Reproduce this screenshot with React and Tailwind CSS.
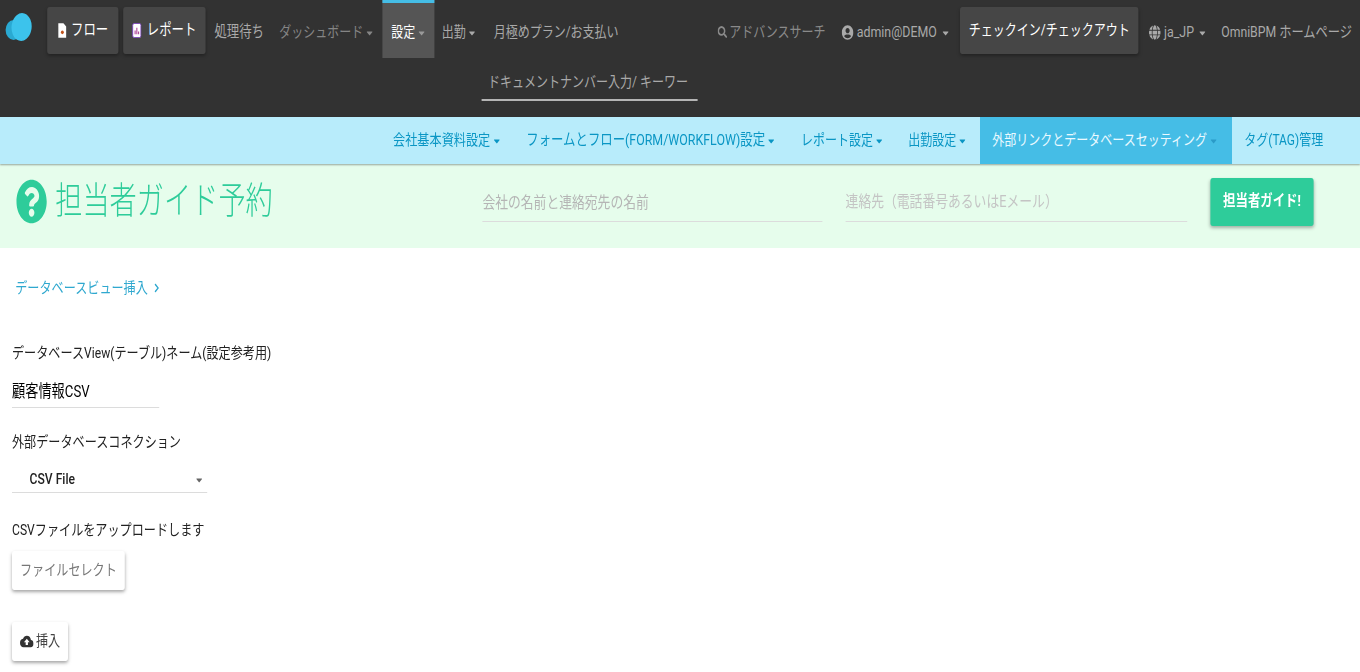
import React from 'react';
import { FaQuestionCircle, FaUserCircle, FaGlobe, FaSearch, FaCaretDown, FaChevronRight } from 'react-icons/fa';
import { MdCloudUpload } from 'react-icons/md';

const font = { fontFamily: 'Roboto, "Noto Sans CJK JP", sans-serif' };

const Caret = ({ className = '' }) => <FaCaretDown className={`inline-block w-[12px] h-[12px] ml-[2px] ${className}`} />;

const Logo = () => (
  <svg viewBox="0 0 34 28" className="w-[34px] h-[28px]">
    <ellipse cx="11" cy="17" rx="10" ry="10" fill="#2aa9d2" />
    <ellipse cx="21" cy="14" rx="12.5" ry="14" fill="#3cc3ec" transform="rotate(14 21 14)" />
  </svg>
);

const FileIcon = () => (
  <svg viewBox="0 0 12 16" className="w-[11px] h-[15px]">
    <path d="M1 0h7l4 4v12H1z" fill="#fff" />
    <circle cx="6.5" cy="10" r="2" fill="#c2541d" />
  </svg>
);

const ReportIcon = () => (
  <svg viewBox="0 0 12 16" className="w-[12px] h-[15px]">
    <rect x="0.5" y="0.5" width="11" height="15" rx="2" fill="#fff" stroke="#7a3fc0" />
    <path d="M3 12V8h1.5v4zM5.3 12V5h1.5v7zM7.6 12V9h1.5v3z" fill="#b04a9a" />
  </svg>
);

const NavButton = ({ children, className = '' }) => (
  <button className={`h-[47px] rounded-[3px] bg-[#464646] text-white shadow-[0_2px_4px_rgba(0,0,0,0.3)] flex items-center justify-center ${className}`}>
    {children}
  </button>
);

const SubItem = ({ children, caret = true, active = false, size = 'text-[15px]', className = '' }) => (
  <a className={`h-full flex items-center whitespace-nowrap ${size} ${active ? 'bg-[#45bde6] text-[#eaf9ff]' : 'text-[#0a96c4]'} ${className}`}>
    {children}
    {caret && <Caret className={active ? 'text-[#2a9bc8]' : 'text-[#0a96c4]'} />}
  </a>
);

const Underlined = ({ children, className = '' }) => (
  <div className={`flex items-center border-b border-[#dcdcdc] ${className}`}>{children}</div>
);

export default function App() {
  return (
    <div className="w-[1360px] h-[672px] overflow-hidden bg-white">
      <div className="w-[1700px] h-[672px] origin-top-left scale-x-[0.8]" style={font}>
        <header className="h-[117px] bg-[#323232] flex flex-col">
          <nav className="h-[73px] flex justify-between text-[15px] text-[#a9a9a9]">
            <div className="flex items-start">
              <div className="ml-[6px] mt-[13px] w-[53px]"><Logo /></div>
              <NavButton className="mt-[7px] w-[89px] gap-[6px] text-[15.5px]"><FileIcon />フロー</NavButton>
              <NavButton className="mt-[7px] ml-[6px] w-[103px] gap-[6px] text-[15.5px]"><ReportIcon />レポート</NavButton>
              <a className="mt-[21px] ml-[11px] whitespace-nowrap text-[15.5px]">処理待ち</a>
              <a className="mt-[21px] ml-[19px] whitespace-nowrap text-[#858585]">ダッシュボード<Caret /></a>
              <a className="ml-[10px] w-[65px] h-[58px] bg-[#555555] border-t-[3px] border-[#45bde6] pt-[18px] pl-[11px] text-white whitespace-nowrap">設定<Caret className="text-[#999]" /></a>
              <a className="mt-[21px] ml-[9px] whitespace-nowrap">出勤<Caret /></a>
              <a className="mt-[21px] ml-[21px] whitespace-nowrap">月極めプラン/お支払い</a>
            </div>
            <div className="flex items-start pr-[10px]">
              <a className="mt-[21px] flex items-center gap-[2px] whitespace-nowrap text-[#8a8a8a]"><FaSearch className="w-[12px] h-[12px]" />アドバンスサーチ</a>
              <a className="mt-[21px] ml-[20px] flex items-center whitespace-nowrap text-[15.5px]"><FaUserCircle className="w-[15px] h-[15px] mr-[4px]" />admin@DEMO<Caret className="ml-[5px]" /></a>
              <NavButton className="mt-[7px] ml-[12px] w-[223px]">チェックイン/チェックアウト</NavButton>
              <a className="mt-[21px] ml-[13px] flex items-center whitespace-nowrap text-[15.5px]"><FaGlobe className="w-[15px] h-[15px] mr-[4px]" />ja_JP<Caret className="ml-[4px]" /></a>
              <a className="mt-[21px] ml-[18px] whitespace-nowrap text-[15.3px]">OmniBPM ホームページ</a>
            </div>
          </nav>
          <div className="pl-[602px]">
            <div className="w-[270px] pb-[8px] border-b-2 border-[#b5b5b5] text-[15px] text-[#a9a9a9] leading-[18px] pl-[8px] whitespace-nowrap">ドキュメントナンバー入力/ キーワー</div>
          </div>
        </header>

        <div className="h-[47px] bg-[#b8ecfb] shadow-[0_1px_2px_rgba(0,0,0,0.35)] relative flex justify-end pr-[46px]">
          <SubItem size="text-[15.2px]">会社基本資料設定</SubItem>
          <SubItem size="text-[15.5px]" className="ml-[31px]">フォームとフロー(FORM/WORKFLOW)設定</SubItem>
          <SubItem className="ml-[31px]">レポート設定</SubItem>
          <SubItem className="ml-[30px]">出勤設定</SubItem>
          <SubItem active className="ml-[16px] w-[315px] pl-[15px]">外部リンクとデータベースセッティング</SubItem>
          <SubItem caret={false} className="ml-[15px]">タグ(TAG)管理</SubItem>
        </div>

        <section className="h-[84px] bg-[#e6fdec] flex items-start">
          <FaQuestionCircle preserveAspectRatio="none" className="ml-[20px] mt-[15px] w-[39px] h-[45px] text-[#2ecc9a]" />
          <h1 className="ml-[10px] mt-[12px] w-[534px] text-[34px] leading-[50px] font-light text-[#2ecc9a] whitespace-nowrap origin-left scale-y-[1.1]">担当者ガイド予約</h1>
          <Underlined className="mt-[13px] w-[425px] h-[45px] pt-[8px] text-[16px] text-[#b5b5b5]">会社の名前と連絡宛先の名前</Underlined>
          <Underlined className="mt-[13px] ml-[29px] w-[427px] h-[45px] pt-[5px] text-[16px] text-[#c4c4c4]">連絡先（電話番号あるいはEメール）</Underlined>
          <button className="mt-[14px] ml-[29px] w-[129px] h-[48px] rounded-[3px] bg-[#2ecc9a] text-white text-[15.5px] font-bold shadow-[0_2px_4px_rgba(0,0,0,0.3)]">担当者ガイド!</button>
        </section>

        <main className="pl-[15px] pt-[29px] text-[15.15px] text-[#222]">
          <a className="ml-[4px] flex items-center text-[#2fa8cf] leading-[22px]">データベースビュー挿入<FaChevronRight className="w-[10px] h-[10px] ml-[6px]" /></a>
          <p className="mt-[43px] leading-[22px]">データベースView(テーブル)ネーム(設定参考用)</p>
          <Underlined className="mt-[16px] w-[184px] h-[28px] text-[16.5px] text-black pb-[2px]">顧客情報CSV</Underlined>
          <p className="mt-[23px] leading-[22px]">外部データベースコネクション</p>
          <Underlined className="mt-[16px] w-[244px] h-[24px] justify-between pl-[22px] pr-[4px] font-medium pb-[2px]">CSV File<FaCaretDown className="w-[12px] h-[12px] text-[#666]" /></Underlined>
          <p className="mt-[26px] leading-[22px]">CSVファイルをアップロードします</p>
          <button className="mt-[10px] block w-[141px] h-[39px] rounded-[3px] bg-white text-[#777] shadow-[0_2px_4px_rgba(0,0,0,0.35)]">ファイルセレクト</button>
          <button className="mt-[32px] flex items-center justify-center w-[70px] h-[39px] rounded-[3px] bg-white text-[#444] shadow-[0_2px_4px_rgba(0,0,0,0.35)]"><MdCloudUpload className="w-[17px] h-[17px] mr-[3px] text-[#333]" />挿入</button>
        </main>
      </div>
    </div>
  );
}
